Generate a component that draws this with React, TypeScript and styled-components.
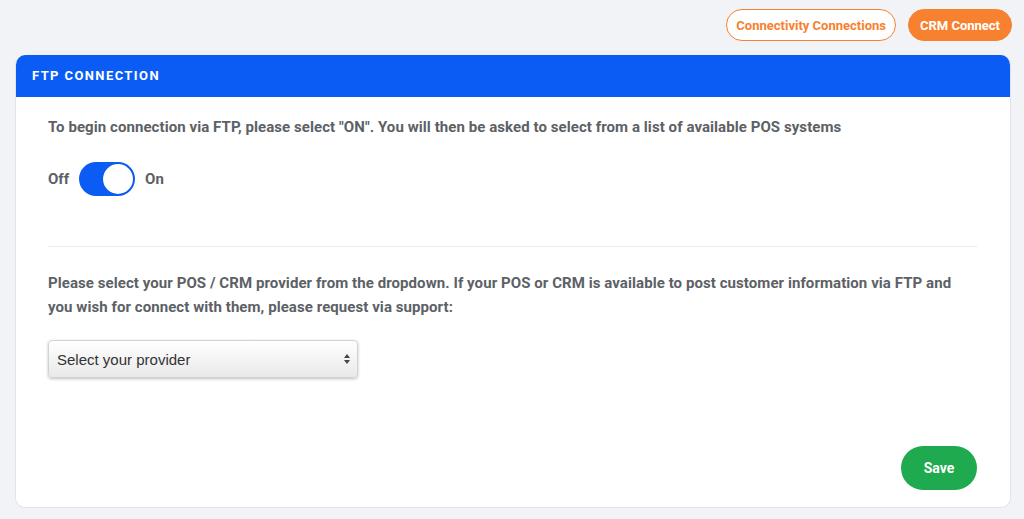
import React, { useState } from 'react';
import styled, { createGlobalStyle } from 'styled-components';

const orange = '#f7812e';
const blue = '#0a5cf5';
const green = '#1faa4f';
const textGray = '#5c6166';

const GlobalStyle = createGlobalStyle`
  html, body {
    margin: 0;
    padding: 0;
    background: #f1f3f7;
    font-family: Roboto, 'Noto Sans', sans-serif;
  }
`;

const Page = styled.div`
  width: 1024px;
  height: 519px;
  box-sizing: border-box;
  padding: 9px 12px 0 15px;
  display: flex;
  flex-direction: column;
`;

const TopBar = styled.div`
  display: flex;
  justify-content: flex-end;
  gap: 12px;
  height: 32px;
  margin-bottom: 14px;
`;

type PillProps = { filled?: boolean };
const PillButton = styled.button<PillProps>`
  height: 32px;
  padding: 0 ${p => (p.filled ? '11px' : '9px')};
  border-radius: 16px;
  font-family: Roboto, sans-serif;
  font-weight: 700;
  font-size: 13px;
  cursor: pointer;
  color: ${p => (p.filled ? '#fff' : orange)};
  background: ${p => (p.filled ? orange : '#fff')};
  border: 1px solid ${orange};
`;

const Card = styled.div`
  width: 996px;
  height: 453px;
  background: #fff;
  border-radius: 10px;
  border: 1px solid #dfe4ec;
  border-top: none;
  box-sizing: border-box;
  display: flex;
  flex-direction: column;
  overflow: hidden;
`;

const CardHeader = styled.div`
  height: 42px;
  background: ${blue};
  display: flex;
  align-items: center;
  padding: 0 0 1px 16px;
  box-sizing: border-box;
  color: #fff;
  font-weight: 700;
  font-size: 13px;
  letter-spacing: 1.4px;
`;

const CardBody = styled.div`
  flex: 1;
  padding: 18px 33px 17px 32px;
  display: flex;
  flex-direction: column;
`;

const Text = styled.p`
  margin: 0;
  color: ${textGray};
  font-weight: 700;
  font-size: 15px;
  line-height: 24px;
  letter-spacing: 0.07px;
`;

const ToggleRow = styled.div`
  display: flex;
  align-items: center;
  gap: 10px;
  margin-top: 23px;
  height: 34px;
`;

const ToggleLabel = styled.span`
  color: ${textGray};
  font-weight: 700;
  font-size: 15px;
`;

type SwitchProps = { on: boolean };
const Switch = styled.button<SwitchProps>`
  position: relative;
  width: 56px;
  height: 34px;
  border-radius: 17px;
  border: none;
  padding: 0;
  cursor: pointer;
  background: ${p => (p.on ? blue : '#c8ccd2')};
  &::after {
    content: '';
    position: absolute;
    top: 2px;
    left: ${p => (p.on ? '24px' : '2px')};
    width: 30px;
    height: 30px;
    border-radius: 50%;
    background: #fff;
    box-shadow: 0 0 1px rgba(0, 0, 0, 0.3);
  }
`;

const Divider = styled.hr`
  border: none;
  border-top: 1px solid #e8ebef;
  margin: 50px 0 24px;
`;

const Select = styled.select`
  margin-top: 21px;
  width: 310px;
  height: 38px;
  padding: 0 8px;
  border: 1px solid #cfd2d6;
  border-radius: 4px;
  font-family: 'Liberation Sans', Arial, sans-serif;
  font-size: 15px;
  color: #333;
  appearance: none;
  background:
    url("data:image/svg+xml,%3Csvg xmlns='http://www.w3.org/2000/svg' width='8' height='12'%3E%3Cpath d='M4 1 L7 5 L1 5 Z M4 11 L7 7 L1 7 Z' fill='%23444'/%3E%3C/svg%3E") no-repeat right 6px center,
    linear-gradient(#ffffff, #e9e9e9);
  box-shadow: 0 1px 3px rgba(0, 0, 0, 0.25);
`;

const Footer = styled.div`
  margin-top: auto;
  display: flex;
  justify-content: flex-end;
`;

const SaveButton = styled.button`
  width: 76px;
  height: 44px;
  border-radius: 22px;
  border: none;
  background: ${green};
  color: #fff;
  font-family: Roboto, sans-serif;
  font-weight: 700;
  font-size: 14px;
  cursor: pointer;
`;

export default function App() {
  const [on, setOn] = useState(true);
  return (
    <>
      <GlobalStyle />
      <Page>
        <TopBar>
          <PillButton>Connectivity Connections</PillButton>
          <PillButton filled>CRM Connect</PillButton>
        </TopBar>
        <Card>
          <CardHeader>FTP CONNECTION</CardHeader>
          <CardBody>
            <Text>
              To begin connection via FTP, please select "ON". You will then be asked to select from a list of
              available POS systems
            </Text>
            <ToggleRow>
              <ToggleLabel>Off</ToggleLabel>
              <Switch on={on} onClick={() => setOn(!on)} aria-label="ftp-toggle" />
              <ToggleLabel>On</ToggleLabel>
            </ToggleRow>
            <Divider />
            <Text>
              Please select your POS / CRM provider from the dropdown. If your POS or CRM is available to post
              customer information via FTP and you wish for connect with them, please request via support:
            </Text>
            <Select defaultValue="">
              <option value="">Select your provider</option>
            </Select>
            <Footer>
              <SaveButton>Save</SaveButton>
            </Footer>
          </CardBody>
        </Card>
      </Page>
    </>
  );
}
